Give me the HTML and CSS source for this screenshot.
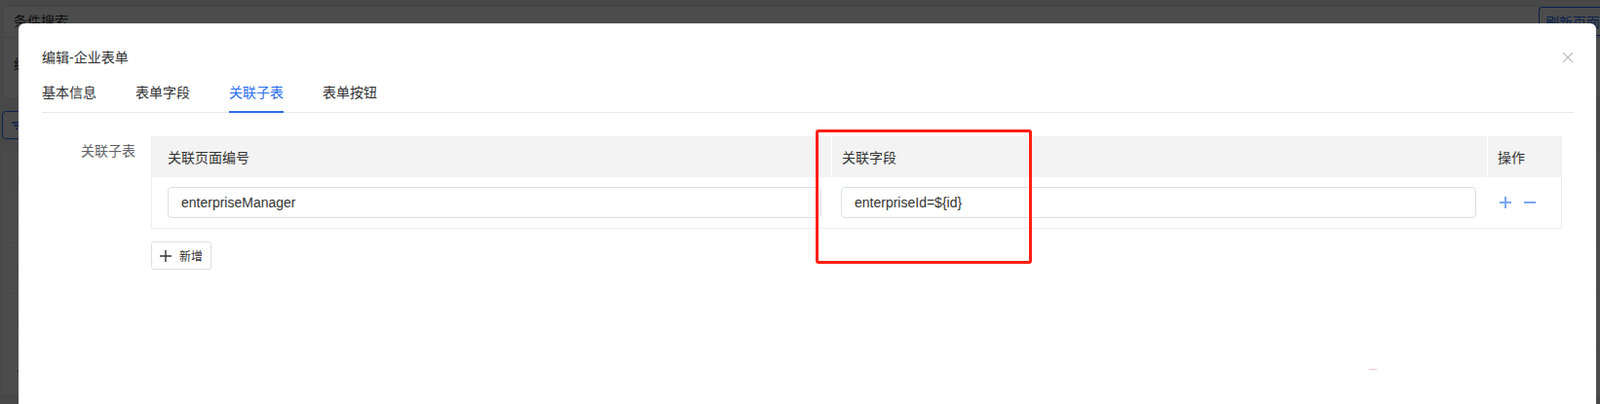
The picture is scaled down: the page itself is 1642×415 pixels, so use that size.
FILE: index.html
```html
<!DOCTYPE html>
<html lang="zh-CN">
<head>
<meta charset="utf-8">
<title>编辑-企业表单</title>
<link rel="stylesheet" href="styles.css">
</head>
<body>
<div class="page">
  <div class="search-card">
    <div class="search-head">
      <span class="search-title">条件搜索</span>
      <button class="refresh-btn">刷新页面</button>
    </div>
    <div class="search-body">
      <span class="search-label">编号</span>
    </div>
  </div>
  <div class="toolbar">
    <button class="filter-btn">
      <svg width="10" height="8" viewBox="0 0 10 8"><path d="M0 1H10M2 4H8M4 7H6" stroke="#1e6fff" stroke-width="1.4"/></svg>
    </button>
  </div>
  <div class="list">
    <div class="list-head">序号</div>
    <div class="list-row">1</div>
    <div class="list-row">2</div>
    <div class="list-row">3</div>
    <div class="list-row">4</div>
  </div>
</div>

<div class="mask"></div>

<div class="dialog">
  <div class="dialog-header">
    <span class="dialog-title">编辑-企业表单</span>
    <button class="dialog-close" aria-label="关闭">
      <svg width="12" height="12" viewBox="0 0 12 12"><path d="M1 1L11 11M11 1L1 11" stroke="#bdbdbd" stroke-width="1.1"/></svg>
    </button>
  </div>
  <div class="tabs">
    <div class="tab">基本信息</div>
    <div class="tab">表单字段</div>
    <div class="tab active">关联子表</div>
    <div class="tab">表单按钮</div>
  </div>
  <div class="dialog-body">
    <div class="form-item">
      <label class="form-label">关联子表</label>
      <div class="form-content">
        <div class="sub-table">
          <div class="th th-first">关联页面编号</div>
          <div class="th">关联字段</div>
          <div class="th">操作</div>
          <div class="td td-first"><input class="cell-input" type="text" value="enterpriseManager"></div>
          <div class="td td-second"><input class="cell-input" type="text" value="enterpriseId=${id}"></div>
          <div class="td td-ops">
            <span class="op-icon"><svg width="16" height="16" viewBox="0 0 16 16"><path d="M2 8H14M8 2V14" stroke="#79a5f4" stroke-width="2"/></svg></span>
            <span class="op-icon"><svg width="16" height="16" viewBox="0 0 16 16"><path d="M2 8H14" stroke="#79a5f4" stroke-width="2"/></svg></span>
          </div>
        </div>
        <button class="add-btn">
          <svg width="12" height="12" viewBox="0 0 12 12"><path d="M0 6H12M6 0V12" stroke="#333" stroke-width="1.4"/></svg>
          <span>新增</span>
        </button>
      </div>
    </div>
  </div>
</div>

<div class="annot-box"></div>
<div class="annot-dash"></div>
</body>
</html>
```

FILE: styles.css
```css
* { box-sizing: border-box; }

html, body {
  margin: 0;
  overflow: hidden;
}

body {
  position: relative;
  width: 1642px;
  height: 415px;
  font-family: "Liberation Sans", "Noto Sans CJK SC", sans-serif;
  font-size: 14px;
  color: #303133;
  background: #f0f2f5;
}

button {
  font-family: inherit;
  cursor: pointer;
}

/* ---------- background page ---------- */
.page {
  padding: 6px 0 0 2px;
}

.search-card {
  height: 95px;
  background: #fff;
  border: 1px solid #e4e7ed;
  border-right: none;
  border-radius: 4px 0 0 4px;
}

.search-head {
  height: 32px;
  display: flex;
  justify-content: space-between;
  align-items: flex-start;
  padding-left: 11px;
  border-bottom: 1px solid #e4e7ed;
}

.search-title {
  line-height: 31px;
  font-size: 14px;
  color: #303133;
}

.refresh-btn {
  width: 63px;
  height: 30px;
  padding: 0 0 0 6px;
  text-align: left;
  white-space: nowrap;
  font-size: 14px;
  color: #1e6fff;
  background: #fff;
  border: 1px solid #1e6fff;
  border-right: none;
  border-radius: 4px 0 0 4px;
}

.search-body {
  padding: 17px 0 0 11px;
  line-height: 20px;
}

.toolbar {
  margin-top: 13px;
}

.filter-btn {
  display: flex;
  align-items: center;
  width: 40px;
  height: 29px;
  padding: 0 0 0 9px;
  background: #fff;
  border: 1px solid #1e6fff;
  border-radius: 4px;
}

.list {
  margin-top: 14px;
  background: #fff;
}

.list-head {
  height: 41px;
  line-height: 40px;
  padding-left: 16px;
  background: #fafafa;
  border-bottom: 1px solid #ebeef5;
}

.list-row {
  height: 52px;
  line-height: 51px;
  padding-left: 16px;
  border-bottom: 1px solid #ebeef5;
}

.mask {
  position: fixed;
  inset: 0;
  background: rgba(0, 0, 0, 0.7);
}

/* ---------- dialog ---------- */
.dialog {
  position: absolute;
  left: 19px;
  top: 24px;
  width: 1619px;
  height: 391px;
  background: #fff;
  border-radius: 6px 6px 0 0;
}

.dialog-header {
  display: flex;
  justify-content: space-between;
  align-items: center;
  padding: 24px 23px 6px 24px;
}

.dialog-title {
  line-height: 22px;
  font-size: 14px;
  color: #303133;
}

.dialog-close {
  display: flex;
  padding: 0;
  border: none;
  background: none;
}

.tabs {
  display: flex;
  gap: 40px;
  margin: 0 23px 0 24px;
  border-bottom: 1px solid #e6e8ee;
}

.tab {
  position: relative;
  height: 39px;
  line-height: 39px;
  font-size: 14px;
  color: #303133;
}

.tab.active {
  color: #2a6ded;
}

.tab.active::after {
  content: "";
  position: absolute;
  left: 0;
  right: 0;
  bottom: -1px;
  height: 2px;
  background: #2a6ded;
}

.dialog-body {
  padding: 24px 0 0 24px;
}

.form-item {
  display: flex;
}

.form-label {
  width: 112px;
  flex: none;
  padding-right: 16px;
  text-align: right;
  line-height: 30px;
  font-size: 14px;
  color: #606266;
}

.form-content {
  display: flex;
  flex-direction: column;
  align-items: flex-start;
}

.sub-table {
  display: grid;
  grid-template-columns: 697px 672px 75px;
  column-gap: 1px;
  background: #fff;
  border: 1px solid #ebeef5;
  border-top: none;
}

.th {
  height: 42px;
  display: flex;
  align-items: center;
  padding-left: 10px;
  background: #f3f3f3;
  font-size: 14px;
  color: #333;
}

.th-first {
  padding-left: 16px;
}

.td {
  height: 52px;
  display: flex;
  align-items: center;
}

.td-first {
  padding: 0 10px 0 16px;
}

.td-second {
  padding: 0 11px 0 9px;
}

.td-ops {
  padding-left: 10px;
  gap: 9px;
}

.op-icon {
  display: flex;
}

.cell-input {
  width: 100%;
  height: 32px;
  padding: 0 13px;
  font-family: inherit;
  font-size: 14px;
  color: #333;
  background: #fff;
  border: 1px solid #dcdfe6;
  border-radius: 4px;
  outline: none;
}

.add-btn {
  display: flex;
  align-items: center;
  gap: 8px;
  height: 29px;
  margin-top: 13px;
  padding: 0 8px 0 8px;
  font-size: 12px;
  color: #333;
  background: #fff;
  border: 1px solid #dcdfe6;
  border-radius: 3px;
}

/* ---------- annotations ---------- */
.annot-box {
  position: absolute;
  left: 837px;
  top: 133px;
  width: 222px;
  height: 138px;
  border: 3px solid #ff1f14;
  border-radius: 3px;
}

.annot-dash {
  position: absolute;
  left: 1405px;
  top: 379px;
  width: 8px;
  height: 1px;
  background: #f4c3d5;
}
```
